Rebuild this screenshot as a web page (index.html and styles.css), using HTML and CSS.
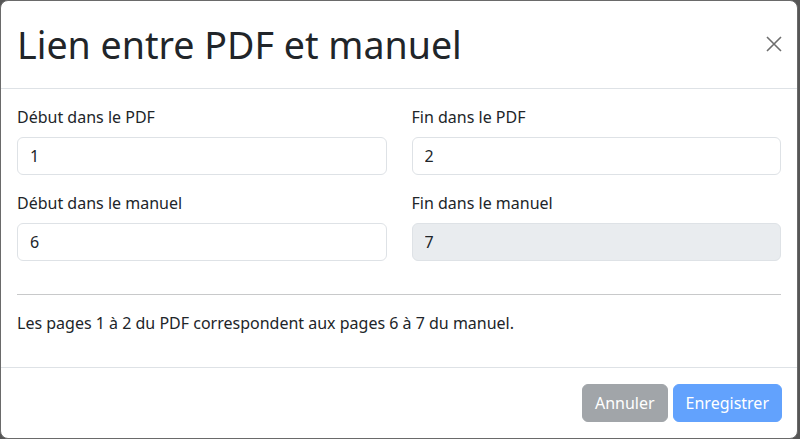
FILE: index.html
```html
<!DOCTYPE html>
<html lang="fr">
<head>
<meta charset="utf-8">
<title>Lien entre PDF et manuel</title>
<link rel="stylesheet" href="styles.css">
</head>
<body>
<div class="modal">
  <div class="modal-header">
    <h1 class="modal-title">Lien entre PDF et manuel</h1>
    <button class="btn-close" type="button" aria-label="Fermer">
      <svg width="16" height="16" viewBox="0 0 16 16"><path d="M1 1L15 15M15 1L1 15" stroke="#6e6e6e" stroke-width="1.6" fill="none"/></svg>
    </button>
  </div>
  <div class="modal-body">
    <div class="fields">
      <div class="field">
        <label class="label">Début dans le PDF</label>
        <input class="input" type="text" value="1">
      </div>
      <div class="field">
        <label class="label">Fin dans le PDF</label>
        <input class="input" type="text" value="2">
      </div>
      <div class="field">
        <label class="label">Début dans le manuel</label>
        <input class="input" type="text" value="6">
      </div>
      <div class="field">
        <label class="label">Fin dans le manuel</label>
        <input class="input" type="text" value="7" disabled>
      </div>
    </div>
    <hr class="sep">
    <p class="summary">Les pages 1 à 2 du PDF correspondent aux pages 6 à 7 du manuel.</p>
  </div>
  <div class="modal-footer">
    <button class="btn btn-secondary" type="button">Annuler</button>
    <button class="btn btn-primary" type="button">Enregistrer</button>
  </div>
</div>
</body>
</html>
```
FILE: styles.css
```css
* { box-sizing: border-box; }
html, body { margin: 0; padding: 0; }
body {
  background: #565656;
  font-family: "Noto Sans", "Open Sans", sans-serif;
  color: #212529;
  font-size: 16px;
  line-height: 24px;
  width: 800px;
  height: 439px;
  overflow: hidden;
}
.modal {
  width: 798px;
  background: #fff;
  border: 1px solid #6a6a6a;
  border-radius: 8px;
  display: flex;
  flex-direction: column;
}
.modal-header {
  display: flex;
  align-items: center;
  padding: 16px 15px 16px 16px;
  border-bottom: 1px solid #dee2e6;
}
.modal-title {
  margin: 0;
  font-size: 37.6px;
  line-height: 55px;
  font-weight: 400;
  flex: 1;
}
.btn-close {
  border: 0;
  background: transparent;
  padding: 0;
  width: 16px;
  height: 16px;
  display: flex;
  margin-top: -2px;
}
.modal-body { padding: 16px; }
.fields {
  display: grid;
  grid-template-columns: 1fr 1fr;
  column-gap: 25px;
  row-gap: 16px;
  margin: 0;
}
.field { display: flex; flex-direction: column; }
.label { display: block; margin-bottom: 8px; }
.input {
  font: inherit;
  color: #212529;
  height: 38px;
  padding: 6px 12px;
  border: 1px solid #dee2e6;
  border-radius: 6px;
  background: #fff;
}
.input:disabled { background: #e9ecef; color: #212529; }
.sep {
  margin: 33px 0 16px;
  border: 0;
  border-top: 1px solid #c8c9ca;
}
.summary { margin: 0 0 16px; }
.modal-footer {
  display: flex;
  justify-content: flex-end;
  gap: 5px;
  padding: 12px 15px 12px 12px;
  border-top: 1px solid #dee2e6;
}
.btn {
  font: inherit;
  margin: 4px 0;
  height: 38px;
  padding: 6px 12px;
  border: 1px solid transparent;
  border-radius: 6px;
  color: #fff;
}
.btn-secondary { background: #a1a5a9; border-color: #a1a5a9; }
.btn-primary { background: #62a2fd; border-color: #62a2fd; }
```
